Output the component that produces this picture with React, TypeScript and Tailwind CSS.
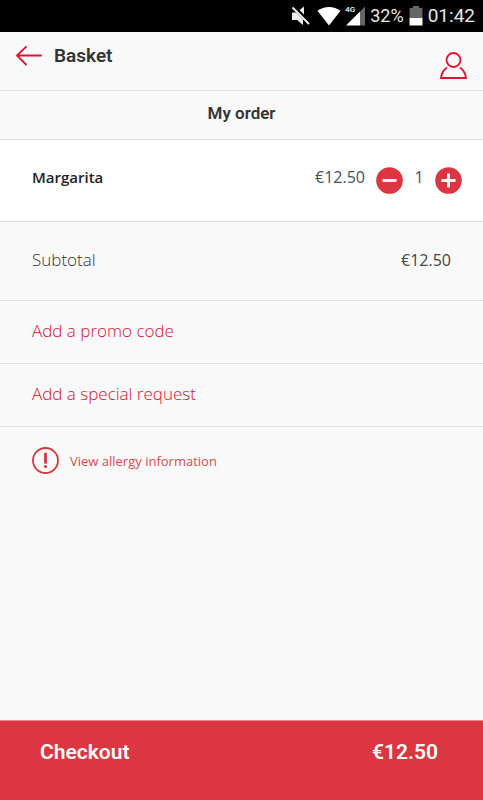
import { useState } from 'react';

const PRICE = 12.5;

function formatPrice(value: number) {
  return `€${value.toFixed(2)}`;
}

function StatusBar() {
  return (
    <div className="flex h-8 items-center justify-end bg-black pr-2 font-['Roboto',sans-serif] text-[#e8e8e8]">
      <svg className="mr-1 h-6 w-6" viewBox="0 0 24 24" aria-hidden="true">
        <path fill="#eeeeee" d="M3 8.500h4.500L14 15v6l-6-5H3zM9 7.2l6-4.7v11z" />
        <path stroke="black" strokeWidth="4" d="M5 3.5 21.5 20" />
        <path stroke="#eeeeee" strokeWidth="2" d="M3.5 3.5 20 20" />
      </svg>
      <svg className="mr-1 h-5 w-6" viewBox="0 0 24 20" aria-hidden="true">
        <path fill="white" d="M.5 4.8C7-.4 17-.4 23.5 4.8L12 19.5z" />
      </svg>
      <div className="relative mr-[5px] h-5 w-5">
        <svg className="h-5 w-5" viewBox="0 0 20 20" aria-hidden="true">
          <path fill="#666666" d="M15 5.5 20 .5v19h-5z" />
          <path fill="white" d="M1 19.5 15 5.5v14z" />
        </svg>
        <span className="absolute top-0 left-0 text-[8px] leading-[8px] font-semibold">4G</span>
      </div>
      <span className="text-[18px] leading-8">32%</span>
      <svg className="mx-1 h-5 w-4" viewBox="0 0 16 20" aria-hidden="true">
        <path fill="#666666" d="M5 0h6v2h3.5v10h-13V2H5z" />
        <path fill="white" d="M1.5 12h13v7.5h-13z" />
      </svg>
      <span className="text-[19px] leading-8">01:42</span>
    </div>
  );
}

function Header() {
  return (
    <header className="flex justify-between border-b border-[#e0e0e0] px-4 pt-3 pb-2">
      <div className="flex h-6 items-center gap-3">
        <button type="button" aria-label="Back">
          <svg className="block h-5 w-[26px]" viewBox="0 0 26 20" fill="none" aria-hidden="true">
            <path
              d="M25 9.5H1M10 .8 1 9.5l9 9"
              stroke="#dc1430"
              strokeWidth="1.8"
              strokeLinecap="round"
              strokeLinejoin="round"
            />
          </svg>
        </button>
        <h1 className="font-['Roboto',sans-serif] text-[19px] leading-6 font-semibold text-[#333333]">Basket</h1>
      </div>
      <button type="button" aria-label="Account" className="pt-2">
        <svg className="h-[30px] w-[27px]" viewBox="0 0 27 30" fill="none" aria-hidden="true">
          <circle cx="13.5" cy="8" r="7" stroke="#dc1430" strokeWidth="1.8" />
          <path d="M7 15.5C3.5 18 1.5 21.5 1 26h25c-.5-4.5-2.5-8-6-10.5" stroke="#dc1430" strokeWidth="1.8" />
        </svg>
      </button>
    </header>
  );
}

interface QuantityButtonProps {
  label: string;
  plus?: boolean;
  onClick: () => void;
}

function QuantityButton({ label, plus, onClick }: QuantityButtonProps) {
  return (
    <button type="button" aria-label={label} onClick={onClick}>
      <svg className="h-[27px] w-[27px]" viewBox="0 0 27 27" aria-hidden="true">
        <circle cx="13.5" cy="13.5" r="13.3" fill="#dc3642" />
        <path d={plus ? 'M6.5 13.5h14M13.5 6.5v14' : 'M6.5 13.5h14'} stroke="white" strokeWidth="2.8" />
      </svg>
    </button>
  );
}

export default function App() {
  const [quantity, setQuantity] = useState(1);
  const total = formatPrice(PRICE * quantity);

  return (
    <div className="flex min-h-screen flex-col bg-[#f9f9f9] font-['Open_Sans','Noto_Sans',sans-serif] text-[#333333]">
      <StatusBar />
      <Header />

      <h2 className="border-b border-[#e0e0e0] pt-3 pb-4 text-center font-['Roboto',sans-serif] text-[17px] leading-5 font-semibold">
        My order
      </h2>

      <main className="flex-1">
        {/* Basket item */}
        <div className="flex justify-between border-b border-[#e0e0e0] bg-white pt-[23px] pr-[21px] pb-[27px] pl-8">
          <span className="text-[15px] leading-7 font-semibold text-[#222222]">Margarita</span>
          <div className="flex items-start">
            <span className="mr-[11px] text-base leading-7 text-[#405261]">{total}</span>
            <div className="flex pt-1">
              <QuantityButton label="Remove one" onClick={() => setQuantity(Math.max(1, quantity - 1))} />
            </div>
            <span className="w-8 text-center text-base leading-7 text-[#405261]">{quantity}</span>
            <div className="flex pt-1">
              <QuantityButton label="Add one" plus onClick={() => setQuantity(quantity + 1)} />
            </div>
          </div>
        </div>

        {/* Subtotal */}
        <div className="flex justify-between border-b border-[#e0e0e0] px-8 pt-6 pb-[26px]">
          <span className="text-[17px] leading-7 font-[350]">Subtotal</span>
          <span className="text-base leading-7 text-[#444444]">{total}</span>
        </div>

        <button
          type="button"
          className="block w-full border-b border-[#e0e0e0] px-8 pt-4 pb-[18px] text-left text-[17px] leading-7 font-[350] text-[#d9102f]"
        >
          Add a promo code
        </button>
        <button
          type="button"
          className="block w-full border-b border-[#e0e0e0] px-8 pt-4 pb-[18px] text-left text-[17px] leading-7 font-[350] text-[#d9102f]"
        >
          Add a special request
        </button>

        <button type="button" className="flex items-center px-8 py-5 text-[13px] leading-6 text-[#d84a50]">
          <svg className="mr-[11px] h-[27px] w-[27px]" viewBox="0 0 27 27" fill="none" aria-hidden="true">
            <circle cx="13.5" cy="13.5" r="12.5" stroke="#d53840" strokeWidth="1.8" />
            <path d="M13.5 7v8.5" stroke="#d53840" strokeWidth="2.8" strokeLinecap="round" />
            <circle cx="13.5" cy="19.5" r="1.6" fill="#d53840" />
          </svg>
          View allergy information
        </button>
      </main>

      <button
        type="button"
        className="flex w-full justify-between border-t border-[#e58a90] bg-[#dc3642] pt-[15px] pr-[45px] pb-8 pl-10 font-['Roboto',sans-serif] text-[21px] leading-8 font-semibold text-white"
      >
        <span>Checkout</span>
        <span>{total}</span>
      </button>
    </div>
  );
}
